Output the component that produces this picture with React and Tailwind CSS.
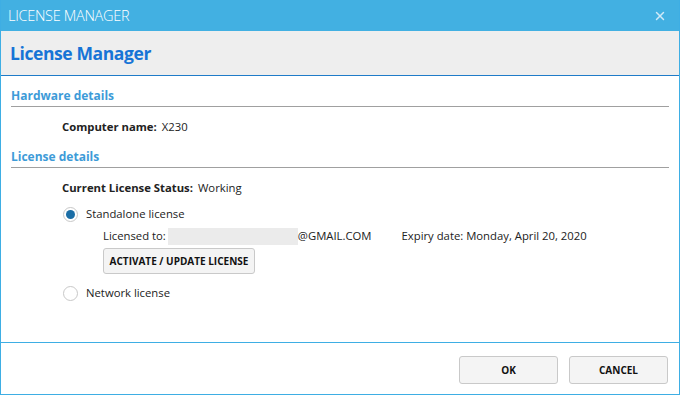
import { X } from 'lucide-react';

const font = { fontFamily: '"Open Sans", "Noto Sans", sans-serif' };

function Radio({ checked, label }) {
  return (
    <div className="flex items-center h-[18px]">
      <span className="w-[15px] h-[15px] rounded-full border border-[#c8c8c8] bg-white flex items-center justify-center">
        {checked && <span className="w-[9px] h-[9px] rounded-full bg-[#1b6ea6]" />}
      </span>
      <span className="ml-[8px] text-[11.3px] text-[#222]">{label}</span>
    </div>
  );
}

function SectionTitle({ children }) {
  return (
    <div className="border-b border-[#a0a0a0] pb-[1px]">
      <div className="text-[12px] font-bold text-[#3d9bd8] leading-[18px]">{children}</div>
    </div>
  );
}

export default function App() {
  return (
    <div className="w-[680px] h-[395px] bg-white flex flex-col border-x border-b border-[#3eaee4] text-[#222]" style={font}>
      {/* Title bar */}
      <div className="h-[31px] bg-[#42b0e2] flex items-center justify-between pl-[7px] pr-[12px] shrink-0">
        <span className="text-white text-[14.5px] font-light tracking-[-0.3px]">LICENSE MANAGER</span>
        <X size={14} strokeWidth={2.5} className="text-[#cfeaf8]" />
      </div>

      {/* Header */}
      <div className="h-[45px] bg-[#eeeeee] border-b border-[#1f7bc8] flex items-center px-[9px] shrink-0">
        <span className="text-[17.5px] font-bold text-[#1774d6] tracking-[-0.4px]">License Manager</span>
      </div>

      {/* Body */}
      <div className="flex-1 px-[10px] pt-[11px]">
        <SectionTitle>Hardware details</SectionTitle>
        <div className="pl-[51px] pt-[12px] text-[11.3px] leading-[16px]">
          <span className="font-bold">Computer name:</span>
          <span className="ml-[5px]">X230</span>
        </div>

        <div className="mt-[13px]">
          <SectionTitle>License details</SectionTitle>
        </div>
        <div className="pl-[51px] pt-[12px] text-[11.3px] leading-[16px]">
          <span className="font-bold">Current License Status:</span>
          <span className="ml-[5px]">Working</span>
        </div>

        <div className="pl-[52px] pt-[9px]">
          <Radio checked label="Standalone license" />
          <div className="pl-[40px] pt-[4px] text-[11.3px]">
            <div className="flex items-center h-[18px]">
              <span>Licensed to:</span>
              <span className="ml-[2px] w-[130px] h-[17px] bg-[#ebebeb]" />
              <span>@GMAIL.COM</span>
              <span className="ml-[30px]">Expiry date: Monday, April 20, 2020</span>
            </div>
            <button className="mt-[3px] h-[26px] w-[152px] border border-[#c9c9c9] rounded-[3px] bg-[#f4f4f4] text-[10px] font-bold text-[#111]">
              ACTIVATE / UPDATE LICENSE
            </button>
          </div>
          <div className="pt-[10px]">
            <Radio label="Network license" />
          </div>
        </div>
      </div>

      {/* Footer */}
      <div className="h-[52px] border-t border-[#3eaee4] flex items-start justify-end gap-[11px] pt-[13px] pr-[11px] shrink-0">
        <button className="w-[99px] h-[28px] border border-[#c9c9c9] rounded-[3px] bg-[#f4f4f4] text-[10px] font-bold text-[#111]">
          OK
        </button>
        <button className="w-[99px] h-[28px] border border-[#c9c9c9] rounded-[3px] bg-[#f4f4f4] text-[10px] font-bold text-[#111]">
          CANCEL
        </button>
      </div>
    </div>
  );
}
